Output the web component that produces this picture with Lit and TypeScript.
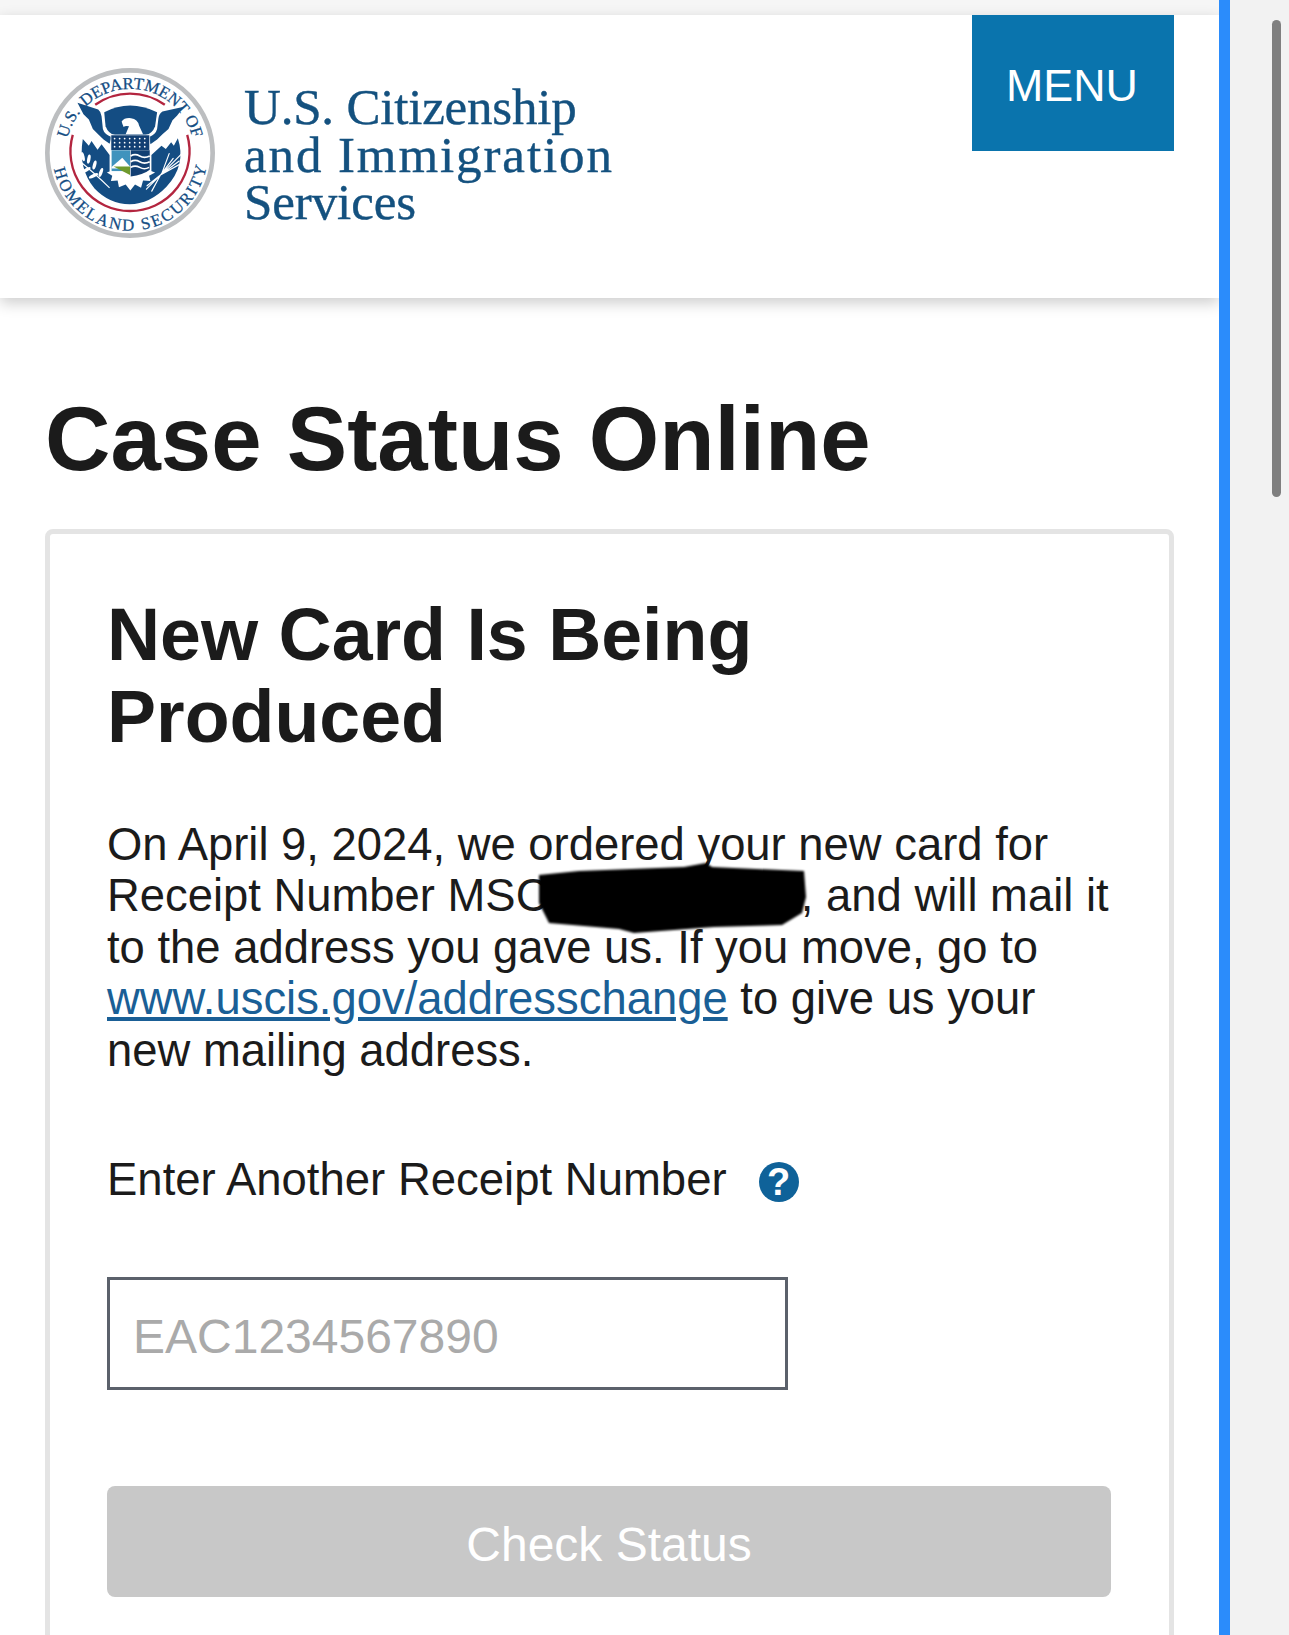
import { LitElement, html, css, svg } from "lit";
import { customElement } from "lit/decorators.js";

const seal = svg`
  <svg class="seal" viewBox="47 40 508 508" role="img" aria-label="Department of Homeland Security seal">
    <defs>
      <path id="arcTop" d="M114,251 A192,192 0 0 1 488,251"></path>
      <path id="arcBot" d="M74,342 A232,232 0 0 0 528,342"></path>
    </defs>
    <circle cx="301" cy="294" r="247" fill="#fff" stroke="#bcbec0" stroke-width="14"></circle>
    <text class="sealtext"><textPath href="#arcTop">U.S.</textPath></text>
    <text class="sealtext"><textPath href="#arcTop" startOffset="110">DEPARTMENT OF</textPath></text>
    <text class="sealtext"><textPath href="#arcBot" textLength="640" lengthAdjust="spacing">HOMELAND SECURITY</textPath></text>
    <path d="M197,150 A178,178 0 0 1 405,150 M130,240 A178,178 0 1 0 472,240" fill="none" stroke="#b3253f" stroke-width="7"></path>
    <!-- lower body with feather edge -->
    <path fill="#144d83" d="M160,252 L178,272 L186,258 L204,284 L216,268 L240,300 L240,350 L365,350 L365,300 L395,272 L408,282 L424,262 L432,272 L444,250 Q470,330 410,395 Q360,447 300,447 Q240,447 195,400 Q145,340 160,252 Z"></path>
    <!-- dome behind head -->
    <path fill="#144d83" d="M224,172 Q300,132 382,172 L376,214 Q368,236 348,240 L256,240 Q236,236 228,214 Z"></path>
    <!-- wings -->
    <path fill="#144d83" d="M144,144 L206,164 Q214,170 216,184 L220,222 Q224,238 246,246 L240,266 L222,254 L208,240 L190,222 L178,194 L162,178 Z"></path>
    <path fill="#144d83" d="M462,156 L398,170 Q388,176 386,190 L382,222 Q378,238 358,246 L362,268 L382,254 L398,238 L416,222 L428,196 L442,182 Z"></path>
    <!-- head -->
    <path fill="#fff" d="M276,200 Q284,188 304,190 Q324,192 328,212 L340,238 L288,238 L298,214 Q286,212 282,216 Q278,208 276,200 Z"></path>
    <!-- white tail -->
    <path fill="#fff" d="M232,352 L262,340 L344,340 L376,352 L358,362 L362,378 L340,376 L334,398 L316,388 L302,406 L288,388 L268,396 L264,376 L244,378 L248,362 Z"></path>
    <!-- shield -->
    <rect x="244" y="240" width="116" height="46" fill="#123f73" stroke="#fff" stroke-width="2"></rect>
    <g fill="#fff">
      ${[255, 270, 285, 300, 315, 330, 345].map((x) =>
        [251, 263, 275].map((y) => svg`<circle cx="${x}" cy="${y}" r="2.6"></circle>`)
      )}
    </g>
    <rect x="246" y="286" width="55" height="62" fill="#3f93bd"></rect>
    <path fill="#fff" d="M246,336 L278,308 L301,334 L301,340 L246,340 Z"></path>
    <path fill="#6f9a2d" d="M252,334 L301,334 L301,360 Z"></path>
    <path fill="#123f73" d="M303,286 H360 V344 Q340,360 303,364 Z"></path>
    <path fill="none" stroke="#fff" stroke-width="5" d="M303,303 Q316,295 330,303 T360,303 M303,320 Q316,312 330,320 T360,320 M303,337 Q316,329 330,337 T358,337"></path>
    <!-- olive branch -->
    <path fill="none" stroke="#fff" stroke-width="3.5" d="M150,318 Q190,350 240,398"></path>
    <g fill="#fff">
      <ellipse cx="160" cy="305" rx="5" ry="14" transform="rotate(-15 160 305)"></ellipse>
      <ellipse cx="178" cy="312" rx="5" ry="14" transform="rotate(10 178 312)"></ellipse>
      <ellipse cx="170" cy="345" rx="5" ry="15" transform="rotate(60 170 345)"></ellipse>
      <ellipse cx="195" cy="330" rx="5" ry="14" transform="rotate(15 195 330)"></ellipse>
      <ellipse cx="192" cy="362" rx="5" ry="15" transform="rotate(65 192 362)"></ellipse>
      <ellipse cx="214" cy="352" rx="5" ry="14" transform="rotate(20 214 352)"></ellipse>
    </g>
    <!-- wheat -->
    <path fill="none" stroke="#fff" stroke-width="3.5" stroke-linecap="round" d="M350,402 L392,360 L430,310 M352,392 L392,360 L448,318 M366,408 L392,360 L462,290 M392,360 L460,322 M395,358 L418,296"></path>
  </svg>
`;

const blob = svg`
  <svg class="blob" viewBox="0 0 280 75" aria-hidden="true">
    <path fill="#000" d="M5,12 L45,8 L150,4 L172,0 L178,4 L270,8 L272,34 L268,50 L248,62 L180,64 L100,70 L85,66 L15,60 L5,40 Z"></path>
  </svg>
`;

@customElement("app-root")
export class AppRoot extends LitElement {
  static styles = css`
    :host {
      display: block;
      height: 1635px;
      overflow: hidden;
      font-family: "Liberation Sans", Arial, sans-serif;
      color: #1b1b1b;
      background: #fff;
    }
    .page { display: flex; height: 1635px; }
    .main { width: 1219px; height: 1635px; flex: none; background: #fff; overflow: hidden; }
    .bar { width: 11px; flex: none; background: #2b8cfb; }
    .gutter { flex: 1; background: #f2f2f2; padding: 20px 8px 0 42px; box-sizing: border-box; }
    .thumb { width: 9px; height: 477px; border-radius: 5px; background: #7f7f7f; }
    .strip { height: 15px; background: #f6f6f6; }
    header {
      position: relative;
      height: 283px;
      background: #fff;
      box-shadow: 0 5px 14px rgba(0, 0, 0, 0.2);
      display: flex;
      justify-content: space-between;
      align-items: flex-start;
      padding: 0 45px 0 45px;
      box-sizing: border-box;
    }
    .logo { display: flex; gap: 29px; padding-top: 53px; }
    .seal { width: 170px; height: 170px; display: block; }
    .sealtext {
      font-family: "Liberation Serif", serif;
      font-size: 50px;
      fill: #144d83;
      stroke: #144d83;
      stroke-width: 0.8px;
    }
    .agency {
      margin-top: 16px;
      font-family: "Liberation Serif", serif;
      font-size: 51px;
      line-height: 47.5px;
      color: #14517f;
      -webkit-text-stroke: 0.4px #14517f;
    }
    .l1 { display: block; letter-spacing: -0.2px; }
    .l2 { display: block; letter-spacing: 1.9px; }
    .l3 { display: block; letter-spacing: -0.1px; }
    .menu {
      width: 202px;
      height: 136px;
      border: 0;
      padding: 4px 2px 0 0;
      background: #0a74ad;
      color: #fff;
      font: 44.8px "Liberation Sans", Arial, sans-serif;
    }
    .content { padding: 91px 45px 0; }
    h1 { margin: 0 0 40px; font-size: 90.6px; line-height: 100px; font-weight: 700; }
    .card {
      border: 5px solid #e4e4e4;
      border-radius: 8px;
      padding: 60px 58px 200px 57px;
    }
    h2 { margin: 0 0 60.5px; max-width: 800px; font-size: 73.5px; line-height: 82px; font-weight: 700; }
    .msg { position: relative; margin: 0; font-size: 45.4px; line-height: 51.5px; }
    .msg a { color: #1a5f96; text-decoration: underline; }
    .blob { position: absolute; left: 427px; top: 44px; width: 280px; height: 75px; filter: blur(1px); }
    .row { display: flex; align-items: flex-start; gap: 32px; margin-top: 77px; }
    label { font-size: 45.5px; line-height: 54px; }
    .help {
      margin-top: 9px;
      width: 40px;
      height: 40px;
      border-radius: 50%;
      background: #0f6299;
      color: #fff;
      font-size: 38px;
      font-weight: 700;
      line-height: 41px;
      text-align: center;
    }
    input {
      display: block;
      margin-top: 69.5px;
      width: 681px;
      height: 113px;
      box-sizing: border-box;
      border: 3px solid #5b616b;
      border-radius: 0;
      padding: 7px 0 0 23px;
      font: 48px "Liberation Sans", Arial, sans-serif;
      outline: none;
    }
    input::placeholder { color: #aaa; opacity: 1; }
    .check {
      display: block;
      margin-top: 96px;
      width: 100%;
      height: 111px;
      border: 0;
      border-radius: 8px;
      padding: 7px 0 0;
      background: #c8c8c8;
      color: #fff;
      font: 48px "Liberation Sans", Arial, sans-serif;
    }
  `;

  render() {
    return html`
      <div class="page">
        <div class="main">
          <div class="strip"></div>
          <header>
            <div class="logo">
              ${seal}
              <div class="agency">
                <span class="l1">U.S. Citizenship</span>
                <span class="l2">and Immigration</span>
                <span class="l3">Services</span>
              </div>
            </div>
            <button class="menu">MENU</button>
          </header>
          <div class="content">
            <h1>Case Status Online</h1>
            <div class="card">
              <h2>New Card Is Being Produced</h2>
              <p class="msg">
                On April 9, 2024, we ordered your new card for Receipt Number MSC2000000000, and will
                mail it to the address you gave us. If you move, go to
                <a href="#">www.uscis.gov/addresschange</a> to give us your new mailing address.
                ${blob}
              </p>
              <div class="row">
                <label for="receipt">Enter Another Receipt Number</label>
                <div class="help">?</div>
              </div>
              <input id="receipt" placeholder="EAC1234567890" />
              <button class="check" disabled>Check Status</button>
            </div>
          </div>
        </div>
        <div class="bar"></div>
        <div class="gutter"><div class="thumb"></div></div>
      </div>
    `;
  }
}
